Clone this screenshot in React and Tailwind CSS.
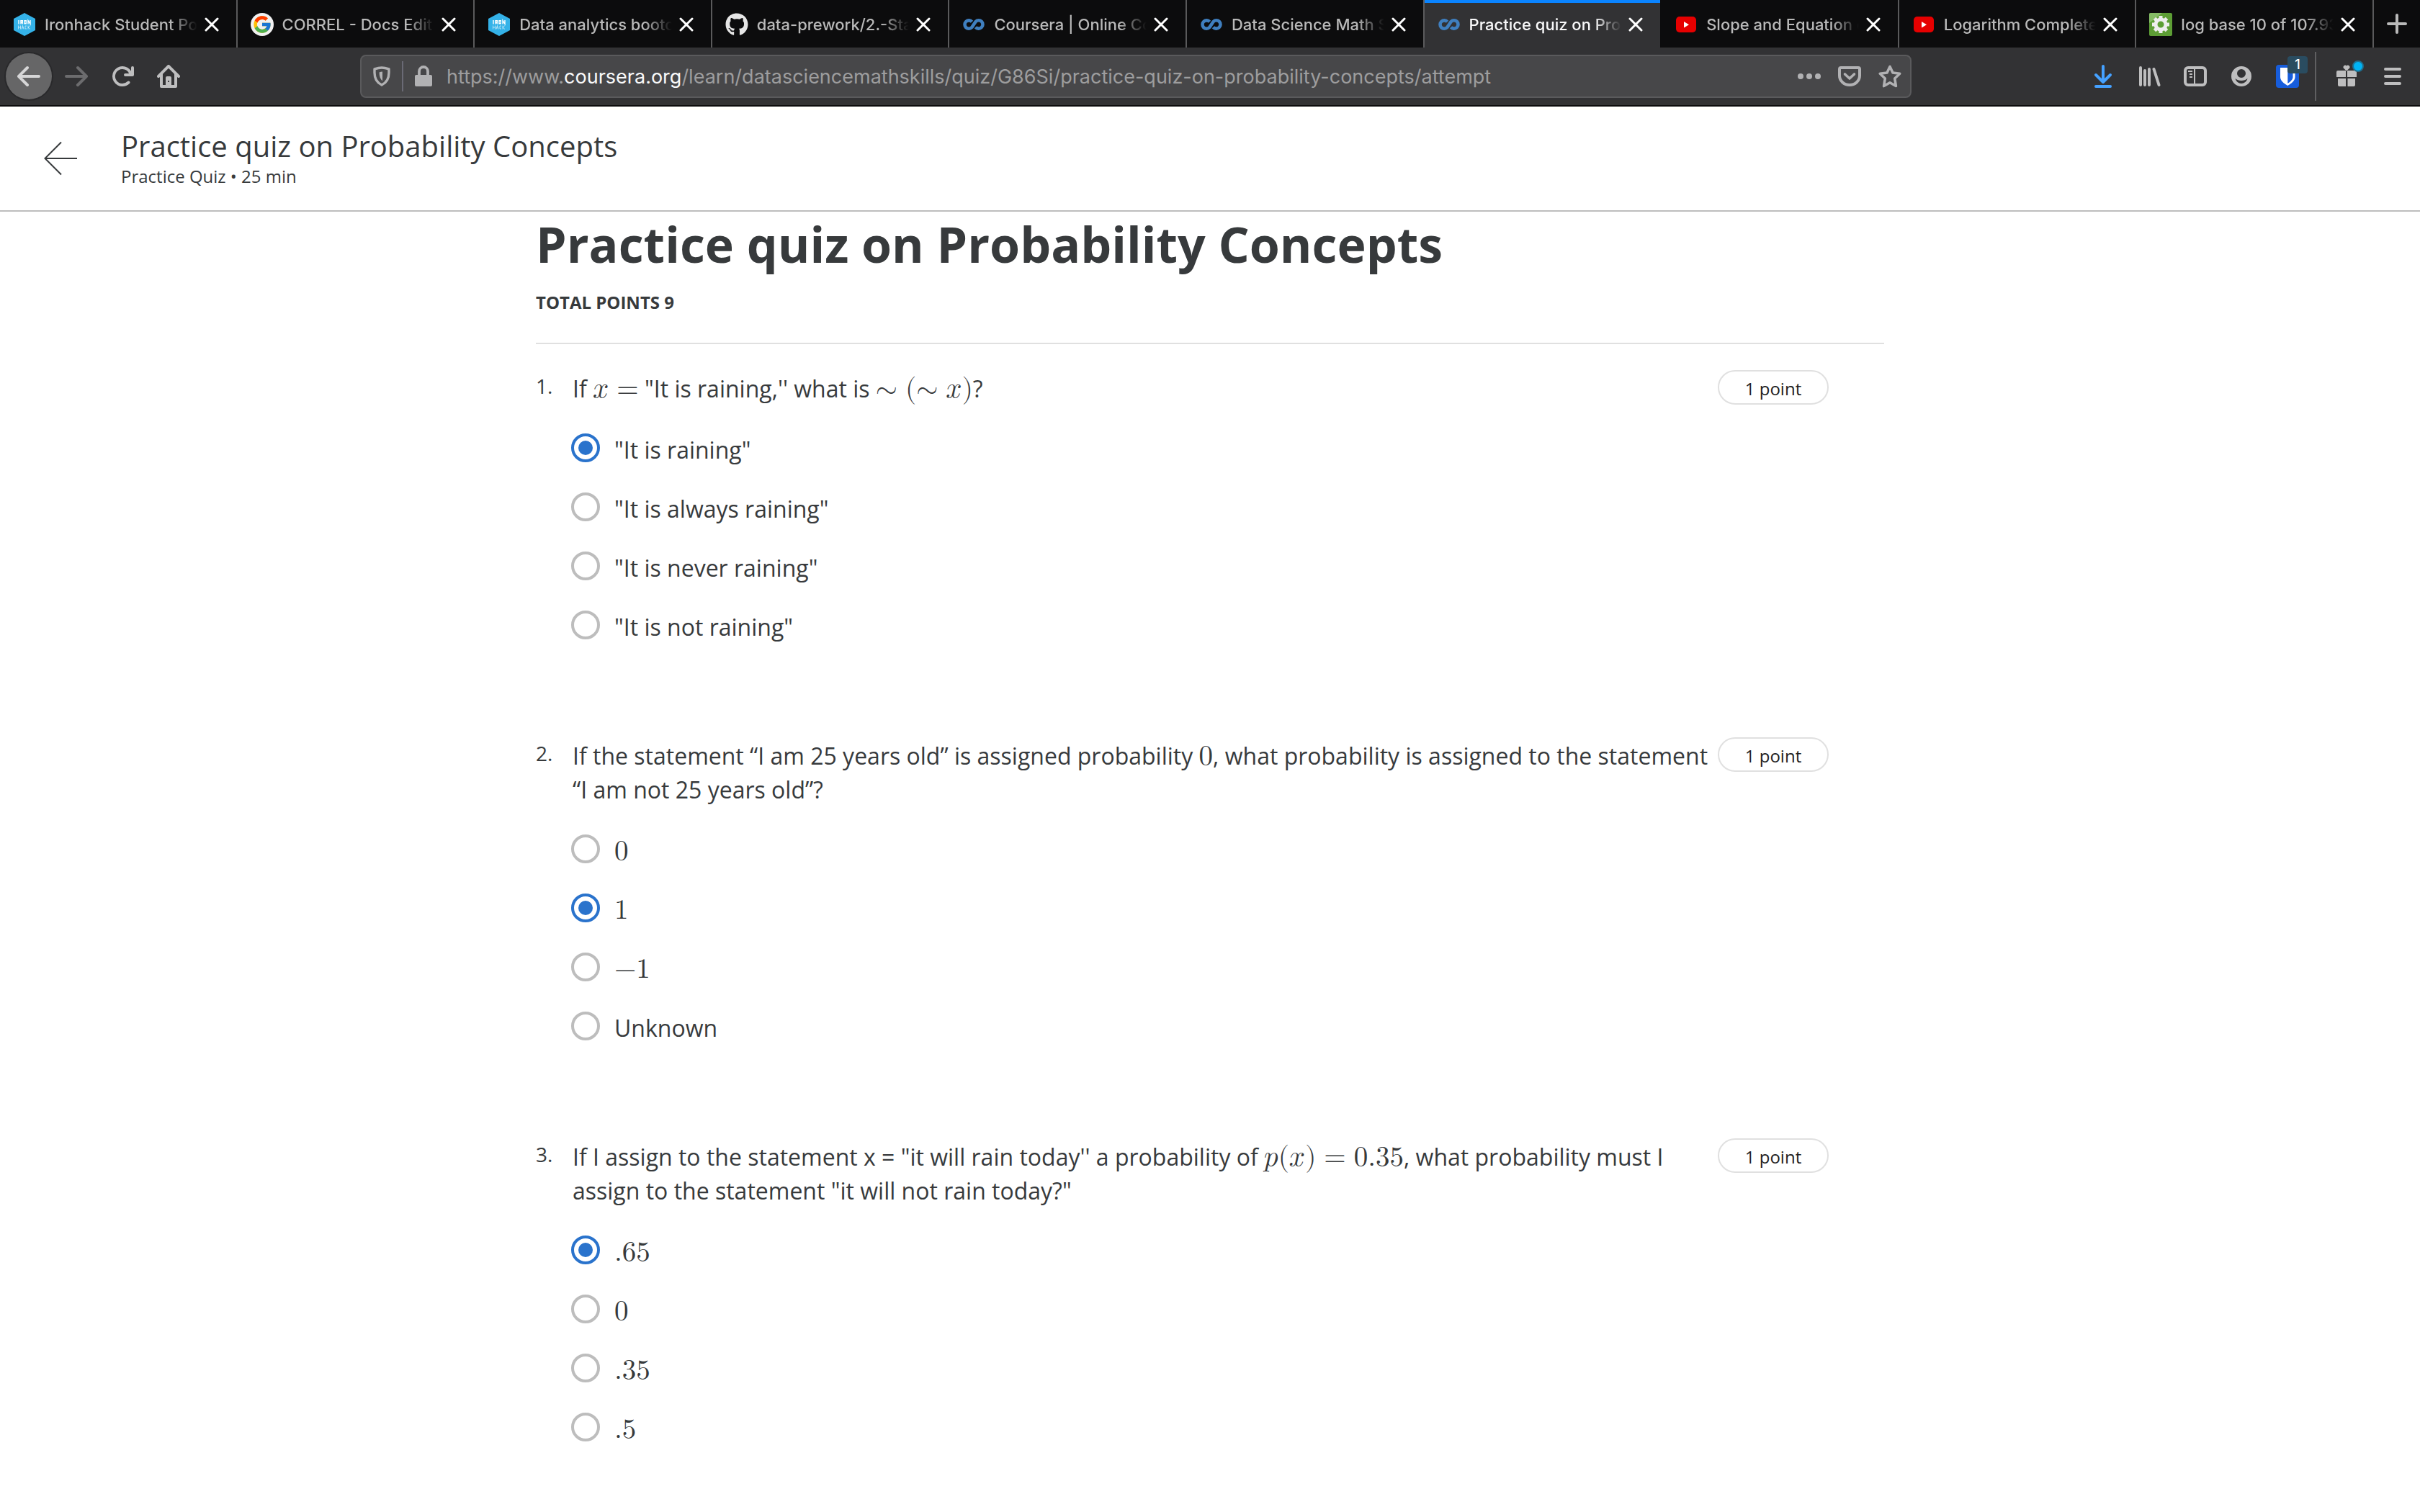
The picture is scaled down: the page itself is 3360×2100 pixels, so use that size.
import { useState } from 'react';
import { FcGoogle } from 'react-icons/fc';
import { FaGithub } from 'react-icons/fa';

/* ---------- Favicons ---------- */

function IronhackIcon() {
  return (
    <svg viewBox="0 0 32 32" className="size-8 shrink-0" aria-hidden="true">
      <path d="M16 0 31 8v16L16 32 1 24V8z" fill="#34b2e8" />
      <g fill="none" stroke="#fff">
        <path strokeWidth="1.4" d="M8 10v5.500M11 15.500V10.700h2.300v2.400H11m1.200 0 1.500 2.400M16 10.700h2.200v4.100H16zM21 15.500v-5l3 4.800V10" />
        <path strokeWidth=".8" opacity=".75" d="M7.500 17.500v5m3-5v5m-3-2.500h3M12 22.500l1.500-5 1.500 5m-2.500-1.700h2M19 18h-2v4h2M21 17.500v5m3-5-3 2.500 3 2.500" />
      </g>
    </svg>
  );
}

function GoogleIcon() {
  return (
    <span className="grid size-8 shrink-0 place-items-center rounded-full bg-[#f1f1f1]">
      <FcGoogle className="size-7" aria-hidden="true" />
    </span>
  );
}

function GithubIcon() {
  return <FaGithub className="size-8 shrink-0 text-[#e6e6e6]" aria-hidden="true" />;
}

function CourseraIcon() {
  return (
    <svg viewBox="0 0 32 32" className="size-8 shrink-0" aria-hidden="true">
      <path
        d="M13.500 12.300A5.700 5.700 0 1 0 13.300 20L18.700 12A5.700 5.700 0 1 1 18.500 19.700"
        fill="none"
        stroke="#3f7fbf"
        strokeWidth="4.600"
      />
    </svg>
  );
}

function YoutubeIcon() {
  return (
    <svg viewBox="0 0 32 32" className="size-8 shrink-0" aria-hidden="true">
      <rect x="2" y="5" width="28" height="22" rx="5" fill="#e60000" />
      <path d="M13 12v8.500l7-4.250z" fill="#fff" />
    </svg>
  );
}

function GearIcon() {
  const teeth = [0, 45, 90, 135, 180, 225, 270, 315];
  return (
    <svg viewBox="0 0 32 32" className="size-8 shrink-0" aria-hidden="true">
      <rect width="32" height="32" rx="2" fill="#5d9e35" />
      <path d="M0 14V2a2 2 0 0 1 2-2h16z" fill="#86bd66" />
      <circle cx="16" cy="16" r="7" fill="none" stroke="#eee" strokeWidth="5" />
      {teeth.map((a) => (
        <rect key={a} x="13.500" y="4" width="5" height="5" fill="#eee" transform={`rotate(${a} 16 16)`} />
      ))}
    </svg>
  );
}

/* ---------- Toolbar icons ---------- */

const iconBox = 'size-8';

function BackArrow() {
  return (
    <svg viewBox="0 0 16 16" className={iconBox} fill="currentColor" aria-hidden="true">
      <path d="M15 7H3.414l4.293-4.293a1 1 0 0 0-1.414-1.414l-6 6a1 1 0 0 0 0 1.414l6 6a1 1 0 0 0 1.414-1.414L3.414 9H15a1 1 0 0 0 0-2z" />
    </svg>
  );
}

function ForwardArrow() {
  return (
    <svg viewBox="0 0 16 16" className={iconBox} fill="currentColor" aria-hidden="true">
      <path d="M15.707 7.293l-6-6a1 1 0 0 0-1.414 1.414L12.586 7H1a1 1 0 0 0 0 2h11.586l-4.293 4.293a1 1 0 1 0 1.414 1.414l6-6a1 1 0 0 0 0-1.414z" />
    </svg>
  );
}

function ReloadIcon() {
  return (
    <svg viewBox="0 0 16 16" className={iconBox} fill="currentColor" aria-hidden="true">
      <path d="M15 1a1 1 0 0 0-1 1v2.418A6.995 6.995 0 1 0 8 15a6.954 6.954 0 0 0 4.950-2.050 1 1 0 0 0-1.414-1.414A5.019 5.019 0 1 1 12.549 6H10a1 1 0 0 0 0 2h5a1 1 0 0 0 1-1V2a1 1 0 0 0-1-1z" />
    </svg>
  );
}

function HomeIcon() {
  return (
    <svg viewBox="0 0 16 16" className={iconBox} fill="currentColor" aria-hidden="true">
      <path
        fillRule="evenodd"
        d="M15.707 7.293l-7-7a1 1 0 0 0-1.414 0l-7 7a1 1 0 0 0 1.414 1.414L2 8.414V15a1 1 0 0 0 1 1h10a1 1 0 0 0 1-1V8.414l.293.293a1 1 0 0 0 1.414-1.414zM12 14h-2V9a1 1 0 0 0-1-1H7a1 1 0 0 0-1 1v5H4V6.414l4-4 4 4zM8.500 11v1h-.9v-1z"
      />
    </svg>
  );
}

function TrackingShield() {
  return (
    <svg viewBox="0 0 16 16" className={iconBox} aria-hidden="true">
      <path
        d="M8 2c1.700 0 3.400.4 5 .9v2.600c0 3.900-1.600 6.900-5 8.500-3.400-1.600-5-4.600-5-8.500V2.900C4.600 2.400 6.300 2 8 2z"
        fill="none"
        stroke="currentColor"
        strokeWidth="1.700"
        strokeLinejoin="round"
      />
      <path d="M8.500 4.800v6.400C7 9.800 6.300 8 6.300 5.200c.7-.2 1.400-.4 2.200-.4z" fill="currentColor" />
    </svg>
  );
}

function LockIcon() {
  return (
    <svg viewBox="0 0 16 16" className={iconBox} aria-hidden="true">
      <path d="M5 8V4.500a3 3 0 0 1 6 0V8" fill="none" stroke="currentColor" strokeWidth="1.900" />
      <rect x="2" y="7" width="12" height="8" rx="1" fill="currentColor" />
    </svg>
  );
}

function DotsIcon() {
  return (
    <svg viewBox="0 0 32 32" className={iconBox} fill="currentColor" aria-hidden="true">
      <circle cx="4" cy="16" r="4" />
      <circle cx="16" cy="16" r="4" />
      <circle cx="28" cy="16" r="4" />
    </svg>
  );
}

function PocketIcon() {
  return (
    <svg viewBox="0 0 32 32" className={iconBox} fill="none" stroke="currentColor" strokeLinecap="round" strokeLinejoin="round" aria-hidden="true">
      <path d="M4 4h24a2 2 0 0 1 2 2v9a14 13 0 0 1-28 0V6a2 2 0 0 1 2-2z" strokeWidth="4" />
      <path d="M9.500 13l6.500 6 6.500-6" strokeWidth="3.600" />
    </svg>
  );
}

function StarIcon() {
  return (
    <svg viewBox="0 0 32 32" className={iconBox} fill="none" stroke="currentColor" strokeWidth="3.600" strokeLinejoin="round" aria-hidden="true">
      <path d="M16 2.500l4 8.500 9.700 1.300-7 6.700 1.700 10.500L16 24.800l-8.400 4.700L9.300 19l-7-6.700L12 11z" />
    </svg>
  );
}

function DownloadIcon() {
  return (
    <svg viewBox="0 0 32 32" className="size-8 text-[#45a1ff]" fill="none" stroke="currentColor" strokeWidth="4" strokeLinecap="round" strokeLinejoin="round" aria-hidden="true">
      <path d="M16 2v22M6 14l10 10 10-10M6 30h20" />
    </svg>
  );
}

function LibraryIcon() {
  return (
    <svg viewBox="0 0 32 32" className={iconBox} fill="none" stroke="currentColor" strokeWidth="4" strokeLinecap="round" aria-hidden="true">
      <path d="M4 4v24M10 8v20M16 6v22M22.500 6l7 22" />
    </svg>
  );
}

function SidebarIcon() {
  return (
    <svg viewBox="0 0 32 32" className={iconBox} fill="none" stroke="currentColor" aria-hidden="true">
      <rect x="2" y="4" width="28" height="24" rx="4" strokeWidth="4" />
      <path d="M15 4v24M6 9h6M8 13h4M8 17h4" strokeWidth="2" />
    </svg>
  );
}

function AccountIcon() {
  return (
    <svg viewBox="0 0 32 32" className={iconBox} fill="currentColor" aria-hidden="true">
      <path
        fillRule="evenodd"
        d="M16 2a14 14 0 1 1 0 28 14 14 0 0 1 0-28zM16 6a6 6 0 1 0 0 12 6 6 0 0 0 0-12zM7.500 19c1 4 4.500 7 8.500 7s7.500-3 8.500-7c-4 4-13 4-17 0z"
      />
    </svg>
  );
}

function BitwardenIcon() {
  return (
    <svg viewBox="0 0 32 32" className={iconBox} aria-hidden="true">
      <rect width="32" height="32" rx="4" fill="#175ddc" />
      <path d="M6 4h20.500v13c0 5-5 9-10.200 12C11 26 6 22 6 17z" fill="#fff" />
      <path d="M16.300 7h7.200v10c0 3.500-3.500 6.500-7.200 8.800z" fill="#175ddc" />
    </svg>
  );
}

function GiftIcon() {
  return (
    <svg viewBox="0 0 32 32" className={iconBox} fill="currentColor" aria-hidden="true">
      <path d="M16 8.500l-4-3.700a2.600 2.600 0 0 1 4-3.300 2.600 2.600 0 0 1 4 3.300z" />
      <path d="M4 8h11v9H2v-7a2 2 0 0 1 2-2zM17 8h11a2 2 0 0 1 2 2v7H17zM4 19h11v11H6a2 2 0 0 1-2-2zM17.500 19H28v9a2 2 0 0 1-2 2h-8.500z" />
    </svg>
  );
}

function MenuIcon() {
  return (
    <svg viewBox="0 0 32 32" className={iconBox} stroke="currentColor" strokeWidth="4" strokeLinecap="round" aria-hidden="true">
      <path d="M6 6h20M6 16h20M6 26h20" />
    </svg>
  );
}

/* ---------- Browser chrome ---------- */

const tabs = [
  { title: 'Ironhack Student Po', Icon: IronhackIcon },
  { title: 'CORREL - Docs Edit', Icon: GoogleIcon },
  { title: 'Data analytics bootc', Icon: IronhackIcon },
  { title: 'data-prework/2.-Sta', Icon: GithubIcon },
  { title: 'Coursera | Online Co', Icon: CourseraIcon },
  { title: 'Data Science Math S', Icon: CourseraIcon },
  { title: 'Practice quiz on Pro', Icon: CourseraIcon, active: true },
  { title: 'Slope and Equation o', Icon: YoutubeIcon },
  { title: 'Logarithm Complete', Icon: YoutubeIcon },
  { title: 'log base 10 of 107.93', Icon: GearIcon },
];

function Tab({ title, Icon, active }) {
  const look = active
    ? 'bg-[#323234] text-[#f9f9fa] border-[#0c0c0d] shadow-[inset_0_4px_0_#0a84ff]'
    : 'text-[#b9b9b9] border-[#5a5a5b]';
  return (
    <div role="tab" aria-selected={!!active} className={`flex min-w-0 flex-1 items-center border-r-2 pt-[2px] pr-6 pl-[18px] ${look}`}>
      <Icon />
      <span className="ml-3 min-w-0 flex-1 overflow-hidden text-[22px] leading-8 font-medium whitespace-nowrap [mask-image:linear-gradient(to_right,black_82%,transparent)]">
        {title}
      </span>
      <button type="button" aria-label="Close tab" className="ml-[10px] text-white">
        <svg viewBox="0 0 20 20" className="size-5" stroke="currentColor" strokeWidth="3" strokeLinecap="round" aria-hidden="true">
          <path d="M2 2l16 16M18 2L2 18" />
        </svg>
      </button>
    </div>
  );
}

function ToolButton({ label, children, className = '' }) {
  return (
    <button type="button" aria-label={label} className={`grid size-16 shrink-0 place-items-center ${className}`}>
      {children}
    </button>
  );
}

function UrlButton({ label, children }) {
  return (
    <button type="button" aria-label={label} className="grid h-14 w-14 shrink-0 place-items-center text-[#b1b1b3]">
      {children}
    </button>
  );
}

function BrowserChrome() {
  return (
    <div className="font-['Inter','Roboto',sans-serif]">
      <div role="tablist" className="flex h-[66px] bg-[#0c0c0d]">
        {tabs.map((t, i) => (
          <Tab key={i} {...t} />
        ))}
        <button type="button" aria-label="New tab" className="grid w-16 place-items-center text-[#b9b9b9]">
          <svg viewBox="0 0 28 28" className="size-7" stroke="currentColor" strokeWidth="4" strokeLinecap="round" aria-hidden="true">
            <path d="M14 2v24M2 14h24" />
          </svg>
        </button>
      </div>

      <div className="flex h-[82px] items-center border-b-2 border-[#0c0c0d] bg-[#323234] px-[6px] text-[#bebebf]">
        <ToolButton label="Back" className="mr-[2px] ml-[2px] rounded-full bg-[#666667] text-[#d6d6d7] ring-2 ring-[#29292b]">
          <BackArrow />
        </ToolButton>
        <ToolButton label="Forward" className="text-[#6c6c6e]">
          <ForwardArrow />
        </ToolButton>
        <ToolButton label="Reload">
          <ReloadIcon />
        </ToolButton>
        <ToolButton label="Home">
          <HomeIcon />
        </ToolButton>

        <div className="mx-[234px] flex h-[60px] min-w-0 flex-1 items-center rounded-lg border-2 border-[#5a5a5c] bg-[#474749]">
          <UrlButton label="Tracking protection">
            <TrackingShield />
          </UrlButton>
          <span className="h-[42px] w-[2px] bg-[#6a6a75]" />
          <UrlButton label="Site information">
            <LockIcon />
          </UrlButton>
          <div
            role="textbox"
            aria-label="Address"
            contentEditable
            suppressContentEditableWarning
            className="ml-1 min-w-0 flex-1 overflow-hidden pt-[2px] text-[27px] leading-9 whitespace-nowrap text-[#9d9d9e] outline-none"
          >
            https://www.<span className="text-[#f9f9fa]">coursera.org</span>/learn/datasciencemathskills/quiz/G86Si/practice-quiz-on-probability-concepts/attempt
          </div>
          <UrlButton label="Page actions">
            <DotsIcon />
          </UrlButton>
          <UrlButton label="Save to Pocket">
            <PocketIcon />
          </UrlButton>
          <UrlButton label="Bookmark this page">
            <StarIcon />
          </UrlButton>
        </div>

        <ToolButton label="Downloads">
          <DownloadIcon />
        </ToolButton>
        <ToolButton label="Library">
          <LibraryIcon />
        </ToolButton>
        <ToolButton label="Sidebars">
          <SidebarIcon />
        </ToolButton>
        <ToolButton label="Account">
          <AccountIcon />
        </ToolButton>
        <ToolButton label="Bitwarden" className="relative">
          <BitwardenIcon />
          <span className="absolute top-1 right-1 h-6 w-7 rounded-sm bg-[#2a4c60] text-center text-[18px] leading-6 font-medium text-white">1</span>
        </ToolButton>
        <span className="mr-[10px] ml-[6px] h-[68px] w-[2px] bg-[#5f5f61]" />
        <ToolButton label="What's new" className="relative">
          <GiftIcon />
          <span className="absolute top-[10px] right-2 size-4 rounded-full border-2 border-[#1f6f8f] bg-[#00b3f4]" />
        </ToolButton>
        <ToolButton label="Menu">
          <MenuIcon />
        </ToolButton>
      </div>
    </div>
  );
}

/* ---------- Quiz ---------- */

function M({ children }) {
  return <span className="font-['Latin_Modern_Math','Liberation_Serif',serif] text-[39px] leading-[0]">{children}</span>;
}

function Rel({ children }) {
  return <span className="mx-[11px]">{children}</span>;
}

const questions = [
  {
    prompt: (
      <>
        If <M>𝑥<span className="ml-[11px]">=</span></M> "It is raining,'' what is <M>∼<span className="ml-[11px]">(</span>∼<span className="ml-[11px]">𝑥</span>)</M>?
      </>
    ),
    options: ['"It is raining"', '"It is always raining"', '"It is never raining"', '"It is not raining"'],
    answer: 0,
  },
  {
    prompt: (
      <>
        If the statement “I am 25 years old” is assigned probability <M>0</M>, what probability is assigned to the statement “I am not 25 years old”?
      </>
    ),
    options: [<M>0</M>, <M>1</M>, <M>−1</M>, 'Unknown'],
    answer: 1,
  },
  {
    prompt: (
      <>
        If I assign to the statement x = "it will rain today'' a probability of <M>𝑝(𝑥)<Rel>=</Rel>0.35</M>, what probability must I assign to the statement "it will not rain today?"
      </>
    ),
    options: [<M>.65</M>, <M>0</M>, <M>.35</M>, <M>.5</M>],
    answer: 0,
  },
];

function Question({ number, prompt, options, answer }) {
  const [picked, setPicked] = useState(answer);
  const promptId = `prompt-${number}`;
  return (
    <li className="flex items-start">
      <span className="w-[49px] shrink-0 text-[28px] leading-[44px]">{number}.</span>
      <div className="min-w-0 flex-1">
        <p id={promptId} className="pt-[2px] pl-[2px] text-[32px] leading-[47px]">
          {prompt}
        </p>
        <div role="radiogroup" aria-labelledby={promptId} className="mt-[39px] flex flex-col items-start gap-9 text-[32px] leading-[46px]">
          {options.map((option, i) => (
            <label key={i} className="flex items-start gap-5">
              <input
                type="radio"
                name={`question-${number}`}
                checked={picked === i}
                onChange={() => setPicked(i)}
                className="size-10 shrink-0 appearance-none rounded-full border-4 border-[#bdbdbd] bg-clip-content p-[6px] checked:border-[#2a73cc] checked:bg-[#2a73cc]"
              />
              <span>{option}</span>
            </label>
          ))}
        </div>
      </div>
      <span className="mr-[77px] h-12 w-[154px] shrink-0 rounded-full border-2 border-[#e0e0e0] text-center text-[24px] leading-[48px] text-[#1f1f1f]">
        1 point
      </span>
    </li>
  );
}

export default function App() {
  return (
    <div className="min-h-screen bg-white text-[#373a3c]">
      <BrowserChrome />
      <div className="font-['Open_Sans','Noto_Sans',sans-serif]">
        <header className="flex h-[146px] items-center border-b-2 border-[#bdbdbd]">
          <a href="#back" aria-label="Back to course" className="ml-[60px] text-[#373a3c]">
            <svg viewBox="0 0 48 48" className="size-12" fill="none" stroke="currentColor" strokeWidth="2" aria-hidden="true">
              <path d="M47 24H2M25 1.500L2.500 24 25 46.500" />
            </svg>
          </a>
          <div className="ml-[60px]">
            <p className="text-[40px] leading-[48px]">Practice quiz on Probability Concepts</p>
            <p className="mt-[2px] text-[24px] leading-8">Practice Quiz • 25 min</p>
          </div>
        </header>

        <main className="mx-auto max-w-[1872px] pt-[3px]">
          <h1 className="text-[68px] leading-[84px] font-bold">Practice quiz on Probability Concepts</h1>
          <p className="mt-[23px] text-[24px] leading-8 font-bold">TOTAL POINTS 9</p>
          <hr className="mt-10 border-t-2 border-[#e0e0e0]" />
          <ol className="mt-9 flex flex-col gap-[130px]">
            {questions.map((q, i) => (
              <Question key={i} number={i + 1} {...q} />
            ))}
          </ol>
        </main>
      </div>
    </div>
  );
}
